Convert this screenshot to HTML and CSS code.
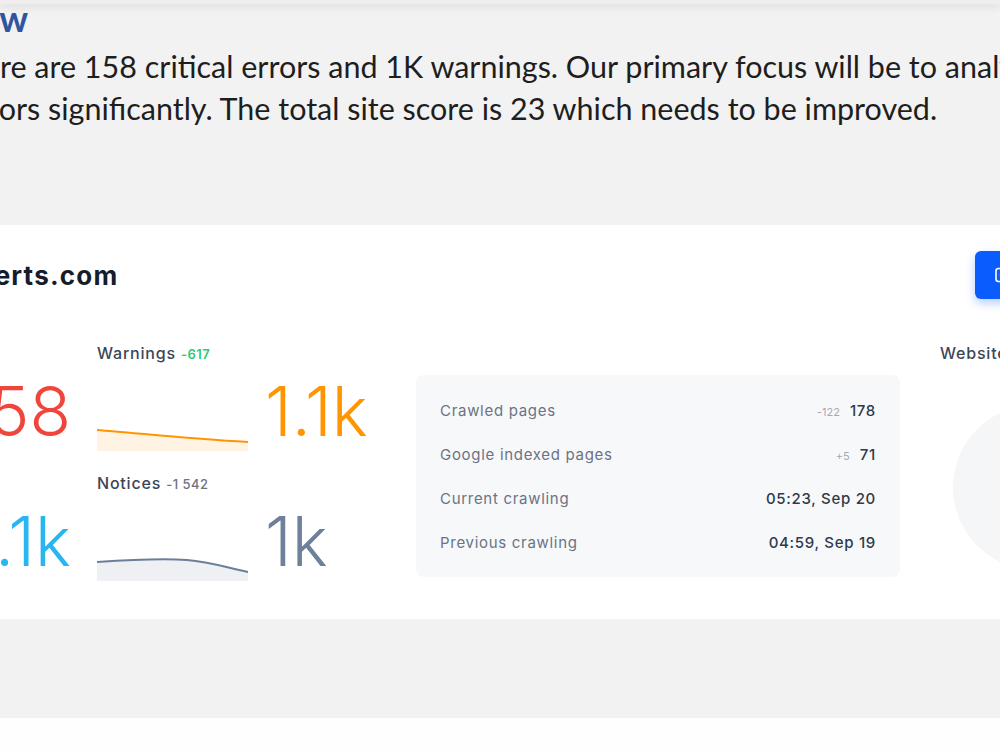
FILE: index.html
```html
<!DOCTYPE html>
<html lang="en">
<head>
  <meta charset="UTF-8">
  <meta name="viewport" content="width=device-width, initial-scale=1.0">
  <title>Site Audit Summary</title>
  <link rel="stylesheet" href="styles.css">
</head>
<body>
  <div class="ruler"></div>

  <!-- Document text above the embedded report -->
  <section class="doc-text">
    <h2 class="doc-heading">Overview</h2>
    <p class="doc-para">
      <span class="line">Here are 158 critical errors and 1K warnings. Our primary focus will be to analyze and reduce these</span>
      <span class="line">errors significantly. The total site score is 23 which needs to be improved.</span>
    </p>
  </section>

  <!-- Site audit report card -->
  <section class="report">
    <div class="report-inner">
      <div class="report-head">
        <div class="site">
          <span class="site-icon"></span>
          <h3 class="site-name">seoexperts.com</h3>
        </div>
        <button class="btn-export">
          <svg width="16" height="16" viewBox="0 0 16 16" fill="none" stroke="#fff" stroke-width="1.6" stroke-linecap="round" stroke-linejoin="round">
            <rect x="1" y="1.5" width="14" height="13" rx="2.5"/>
            <path d="M8 4.5v6M5.5 8l2.5 2.5L10.5 8"/>
          </svg>
          Export PDF
        </button>
      </div>

      <div class="report-body">
        <div class="metrics">
          <div class="metric">
            <div class="metric-label">Errors <span class="delta delta-good">-38</span></div>
            <div class="metric-row">
              <svg class="spark" viewBox="0 0 151 50">
                <path d="M0 24 C40 28 90 34 151 40 L151 50 L0 50 Z" fill="#feecea"/>
                <path d="M0 24 C40 28 90 34 151 40" fill="none" stroke="#f0453a" stroke-width="2"/>
              </svg>
              <span class="metric-value value-red">158</span>
            </div>
          </div>
          <div class="metric">
            <div class="metric-label">Warnings <span class="delta delta-good">-617</span></div>
            <div class="metric-row">
              <svg class="spark" viewBox="0 0 151 50">
                <path d="M0 29 C40 32 90 38 151 41 L151 50 L0 50 Z" fill="#fff3e4"/>
                <path d="M0 29 C40 32 90 38 151 41" fill="none" stroke="#ff9500" stroke-width="2"/>
              </svg>
              <span class="metric-value value-orange">1.1k</span>
            </div>
          </div>
          <div class="metric">
            <div class="metric-label">Passed checks <span class="delta">+210</span></div>
            <div class="metric-row">
              <svg class="spark" viewBox="0 0 151 50">
                <path d="M0 36 C50 34 100 30 151 26 L151 50 L0 50 Z" fill="#e8f6fd"/>
                <path d="M0 36 C50 34 100 30 151 26" fill="none" stroke="#29b5f0" stroke-width="2"/>
              </svg>
              <span class="metric-value value-blue">2.1k</span>
            </div>
          </div>
          <div class="metric">
            <div class="metric-label">Notices <span class="delta">-1 542</span></div>
            <div class="metric-row">
              <svg class="spark" viewBox="0 0 151 50">
                <path d="M0 31 C30 29 60 27 90 29 C115 31 130 37 151 41 L151 50 L0 50 Z" fill="#eef0f4"/>
                <path d="M0 31 C30 29 60 27 90 29 C115 31 130 37 151 41" fill="none" stroke="#6c7f98" stroke-width="2"/>
              </svg>
              <span class="metric-value value-slate">1k</span>
            </div>
          </div>
        </div>

        <div class="crawl-info">
          <div class="info-row">
            <span class="info-label">Crawled pages</span>
            <span class="info-value"><small>-122</small>178</span>
          </div>
          <div class="info-row">
            <span class="info-label">Google indexed pages</span>
            <span class="info-value"><small>+5</small>71</span>
          </div>
          <div class="info-row">
            <span class="info-label">Current crawling</span>
            <span class="info-value">05:23, Sep 20</span>
          </div>
          <div class="info-row">
            <span class="info-label">Previous crawling</span>
            <span class="info-value">04:59, Sep 19</span>
          </div>
        </div>

        <div class="score">
          <div class="metric-label">Website score</div>
          <div class="score-circle"></div>
        </div>
      </div>
    </div>
  </section>

  <div class="page-gap"></div>
  <div class="next-page"></div>
</body>
</html>
```

FILE: styles.css
```css
* {
  box-sizing: border-box;
}
html, body {
  margin: 0;
}
body {
  height: 750px;
  overflow: hidden;
  background: #f2f2f2;
  font-family: Lato, "Open Sans", sans-serif;
  color: #1e1e1e;
}

/* toolbar edge that sits over the page */
.ruler {
  position: fixed;
  top: 0;
  left: 0;
  right: 0;
  height: 4px;
  background: #efeeec;
  box-shadow: 0 2px 8px rgba(0, 0, 0, 0.14);
  z-index: 2;
}

/* document text */
.doc-text {
  height: 225px;
  margin-left: -39px;
}
.doc-heading {
  margin: 0 0 0 -89px;
  font-size: 36px;
  line-height: 36px;
  font-weight: 700;
  color: #2f55a0;
}
.doc-para {
  margin: 9px 0 0;
  font-size: 30.5px;
  line-height: 42px;
}
.doc-para .line {
  display: block;
  white-space: nowrap;
}

/* report card */
.report {
  height: 394px;
  overflow: hidden;
  background: #fff;
}
.report-inner {
  width: 1330px;
  margin-left: -199px;
  padding-top: 26px;
  font-family: Inter, "Open Sans", sans-serif;
}
.report-head {
  display: flex;
  align-items: center;
  justify-content: space-between;
  height: 48px;
  padding-left: 38px;
}
.site {
  display: flex;
  align-items: center;
  gap: 16px;
}
.site-icon {
  width: 40px;
  height: 40px;
  border-radius: 10px;
  background: #eef2ff;
}
.site-name {
  margin: 0;
  font-size: 26px;
  font-weight: 700;
  letter-spacing: 1.2px;
  color: #141c2e;
}
.btn-export {
  display: flex;
  align-items: center;
  gap: 10px;
  width: 156px;
  height: 48px;
  padding: 0 20px;
  border: 0;
  border-radius: 6px;
  background: #0b5cff;
  color: #fff;
  font: 600 15px Inter, sans-serif;
  box-shadow: 0 4px 10px rgba(11, 92, 255, 0.3);
}

.report-body {
  display: flex;
  align-items: flex-start;
  gap: 40px;
  margin-top: 44px;
}

/* metrics with sparklines */
.metrics {
  display: grid;
  grid-template-columns: 270px 279px;
  column-gap: 26px;
  row-gap: 22px;
}
.metric-label {
  font-size: 16px;
  line-height: 20px;
  font-weight: 500;
  letter-spacing: 0.8px;
  color: #3b4658;
}
.delta {
  font-size: 13px;
  font-weight: 500;
  letter-spacing: 0.5px;
  color: #6b7280;
}
.delta-good {
  color: #2ecc71;
  font-weight: 600;
}
.metric-row {
  display: flex;
  align-items: flex-end;
  gap: 17px;
  height: 87px;
}
.spark {
  display: block;
  width: 151px;
  height: 50px;
}
.metric-value {
  margin-bottom: 6px;
  font-size: 68px;
  line-height: 68px;
  font-weight: 300;
}
.value-red { color: #f0453a; }
.value-orange { color: #ff9500; }
.value-blue { color: #29b5f0; }
.value-slate { color: #6f819a; }

/* crawl summary */
.crawl-info {
  flex: 0 0 484px;
  margin-top: 32px;
  padding: 13px 24px;
  border-radius: 8px;
  background: #f7f8fa;
}
.info-row {
  display: flex;
  align-items: center;
  justify-content: space-between;
  height: 44px;
  font-size: 15px;
  letter-spacing: 0.7px;
}
.info-label {
  color: #6b7384;
}
.info-value {
  font-weight: 500;
  color: #2f3a4b;
}
.info-value small {
  margin-right: 10px;
  font-size: 11px;
  font-weight: 400;
  letter-spacing: 0;
  color: #a3aab6;
}

/* score */
.score {
  flex: 0 0 191px;
}
.score-circle {
  width: 165px;
  height: 165px;
  margin: 42px auto 0;
  border-radius: 50%;
  background: #f5f6f8;
}

.page-gap {
  height: 99px;
}
.next-page {
  height: 40px;
  background: #fefefe;
}
```
